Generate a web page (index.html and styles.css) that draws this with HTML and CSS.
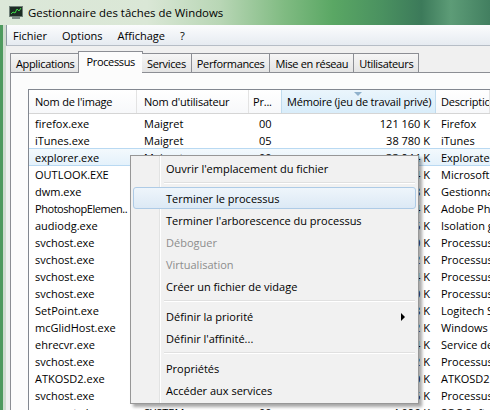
FILE: index.html
```html
<!DOCTYPE html>
<html lang="fr">
<head>
<meta charset="utf-8">
<title>Gestionnaire des tâches de Windows</title>
<link rel="stylesheet" href="styles.css">
</head>
<body>
<div class="window">
  <div class="titlebar">
    <svg class="appicon" width="14" height="14" viewBox="0 0 14 14">
      <rect x="0.5" y="0.5" width="13" height="10" fill="#1d2b24" stroke="#6f7f78"/>
      <polyline points="2,8 4,6 6,7 8,3 10,5 12,2" fill="none" stroke="#3fdc4a" stroke-width="1"/>
      <rect x="3" y="11" width="8" height="2" fill="#7c8c86"/>
    </svg>
    <span class="title">Gestionnaire des tâches de Windows</span>
  </div>
  <div class="client">
    <div class="menubar">
      <span class="mitem">Fichier</span>
      <span class="mitem">Options</span>
      <span class="mitem">Affichage</span>
      <span class="mitem">?</span>
    </div>
    <div class="tabs">
      <span class="tab">Applications</span>
      <span class="tab active">Processus</span>
      <span class="tab">Services</span>
      <span class="tab">Performances</span>
      <span class="tab">Mise en réseau</span>
      <span class="tab">Utilisateurs</span>
    </div>
    <div class="panel">
      <div class="list">
        <div class="row head">
          <span class="c c1">Nom de l'image</span>
          <span class="c c2">Nom d'utilisateur</span>
          <span class="c c3">Pr...</span>
          <span class="c c4 sorted"><i class="arrow"></i>Mémoire (jeu de travail privé)</span>
          <span class="c c5">Description</span>
        </div>
        <div class="row"><span class="c c1">firefox.exe</span><span class="c c2">Maigret</span><span class="c c3">00</span><span class="c c4">121 160 K</span><span class="c c5">Firefox</span></div>
        <div class="row"><span class="c c1">iTunes.exe</span><span class="c c2">Maigret</span><span class="c c3">05</span><span class="c c4">38 780 K</span><span class="c c5">iTunes</span></div>
        <div class="row sel"><span class="c c1">explorer.exe</span><span class="c c2">Maigret</span><span class="c c3">00</span><span class="c c4">33 944 K</span><span class="c c5">Explorateur Windows</span></div>
        <div class="row"><span class="c c1">OUTLOOK.EXE</span><span class="c c2">Maigret</span><span class="c c3">00</span><span class="c c4">30 484 K</span><span class="c c5">Microsoft Office Outlook</span></div>
        <div class="row"><span class="c c1">dwm.exe</span><span class="c c2">Maigret</span><span class="c c3">00</span><span class="c c4">24 088 K</span><span class="c c5">Gestionnaire de fenêtres</span></div>
        <div class="row"><span class="c c1 tight">PhotoshopElemen..</span><span class="c c2">Maigret</span><span class="c c3">00</span><span class="c c4">20 804 K</span><span class="c c5">Adobe Photoshop</span></div>
        <div class="row"><span class="c c1">audiodg.exe</span><span class="c c2">SERVICE LO...</span><span class="c c3">00</span><span class="c c4">17 916 K</span><span class="c c5">Isolation graphique</span></div>
        <div class="row"><span class="c c1">svchost.exe</span><span class="c c2">SYSTEM</span><span class="c c3">00</span><span class="c c4">15 260 K</span><span class="c c5">Processus hôte</span></div>
        <div class="row"><span class="c c1">svchost.exe</span><span class="c c2">SERVICE LO...</span><span class="c c3">00</span><span class="c c4">12 492 K</span><span class="c c5">Processus hôte</span></div>
        <div class="row"><span class="c c1">svchost.exe</span><span class="c c2">SYSTEM</span><span class="c c3">00</span><span class="c c4">9 884 K</span><span class="c c5">Processus hôte</span></div>
        <div class="row"><span class="c c1">svchost.exe</span><span class="c c2">SERVICE RÉ...</span><span class="c c3">00</span><span class="c c4">8 120 K</span><span class="c c5">Processus hôte</span></div>
        <div class="row"><span class="c c1">SetPoint.exe</span><span class="c c2">Maigret</span><span class="c c3">00</span><span class="c c4">7 348 K</span><span class="c c5">Logitech SetPoint</span></div>
        <div class="row"><span class="c c1">mcGlidHost.exe</span><span class="c c2">Maigret</span><span class="c c3">00</span><span class="c c4">6 912 K</span><span class="c c5">Windows Installer</span></div>
        <div class="row"><span class="c c1">ehrecvr.exe</span><span class="c c2">SERVICE RÉ...</span><span class="c c3">00</span><span class="c c4">6 044 K</span><span class="c c5">Service de récepteur</span></div>
        <div class="row"><span class="c c1">svchost.exe</span><span class="c c2">SERVICE LO...</span><span class="c c3">00</span><span class="c c4">5 712 K</span><span class="c c5">Processus hôte</span></div>
        <div class="row"><span class="c c1">ATKOSD2.exe</span><span class="c c2">Maigret</span><span class="c c3">00</span><span class="c c4">4 980 K</span><span class="c c5">ATKOSD2</span></div>
        <div class="row"><span class="c c1">svchost.exe</span><span class="c c2">SYSTEM</span><span class="c c3">00</span><span class="c c4">4 516 K</span><span class="c c5">Processus hôte</span></div>
        <div class="row"><span class="c c1">wmpnetwk.exe</span><span class="c c2">SYSTEM</span><span class="c c3">00</span><span class="c c4">4 096 K</span><span class="c c5">SOC Software</span></div>
      </div>
    </div>
  </div>

  <div class="ctx">
    <div class="ci">Ouvrir l'emplacement du fichier</div>
    <div class="sep"></div>
    <div class="ci hover">Terminer le processus</div>
    <div class="ci">Terminer l'arborescence du processus</div>
    <div class="ci dis">Déboguer</div>
    <div class="ci dis">Virtualisation</div>
    <div class="ci">Créer un fichier de vidage</div>
    <div class="sep"></div>
    <div class="ci sub">Définir la priorité<i class="subarrow"></i></div>
    <div class="ci">Définir l'affinité...</div>
    <div class="sep"></div>
    <div class="ci">Propriétés</div>
    <div class="ci">Accéder aux services</div>
  </div>
</div>
</body>
</html>
```

FILE: styles.css
```css
* { box-sizing: border-box; }
html, body { margin: 0; padding: 0; }
body {
  width: 490px;
  height: 410px;
  overflow: hidden;
  background: #4e9a5e;
  font-family: "Open Sans", "Noto Sans", sans-serif;
  font-size: 11px;
  color: #000;
}
.window {
  position: relative;
  width: 490px;
  height: 410px;
  display: flex;
  flex-direction: column;
}
.titlebar {
  height: 25px;
  flex: none;
  display: flex;
  align-items: center;
  gap: 5px;
  padding-left: 9px;
  background: linear-gradient(90deg, #dce8d9 0%, #dae7d6 30%, #b8d6b5 45%, #80bb82 58%, #5aa764 68%, #4a9160 78%, #3c7a5a 86%, #5d9c77 92%, #427f60 100%);
}
.appicon { flex: none; margin-top: 1px; }
.title {
  font-size: 11.4px;
  color: #000;
  white-space: nowrap;
}
.client {
  flex: 1;
  margin-left: 3px;
  border-left: 3px solid #cfdccf;
  background: #f0f0f0;
  display: flex;
  flex-direction: column;
  min-height: 0;
}
.menubar {
  height: 21px;
  flex: none;
  display: flex;
  align-items: center;
  border-left: 1px solid #8d9aa2;
  background: linear-gradient(#fbfcfd, #e6ebf1);
  border-bottom: 1px solid #b6bdc6;
}
.mitem { padding: 0 7.5px; }
.mitem:first-child { padding-left: 6px; }
.tabs {
  flex: none;
  display: flex;
  align-items: flex-end;
  margin-top: 5px;
  padding-left: 4px;
  height: 21px;
  position: relative;
  z-index: 1;
}
.tab {
  height: 19px;
  padding: 0 5px;
  display: flex;
  align-items: center;
  border: 1px solid #8c8e94;
  border-bottom: none;
  border-right: none;
  background: linear-gradient(#f6f6f6, #e4e4e4);
  white-space: nowrap;
  letter-spacing: -0.35px;
}
.tab:last-child { border-right: 1px solid #8c8e94; }
.tab.active {
  height: 22px;
  margin-bottom: -1px;
  padding: 0 7px 2px;
  background: #fcfcfc;
  border-right: 1px solid #8c8e94;
  margin-left: -1px;
  margin-right: -1px;
}
.tab.active + .tab { border-left: none; }
.panel {
  flex: 1;
  margin-left: 4px;
  border: 1px solid #8c8e94;
  border-right: none;
  border-bottom: none;
  background: #fcfcfc;
  padding: 16px 0 0 17px;
  min-height: 0;
  overflow: hidden;
}
.list {
  border: 1px solid #828790;
  border-right: none;
  border-bottom: none;
  background: #fff;
  height: 400px;
}
.row {
  display: grid;
  grid-template-columns: 108px 112px 33px 154px 1fr;
  height: 18px;
  margin-top: -1px;
  align-items: center;
  white-space: nowrap;
  border-top: 1px solid transparent;
  border-bottom: 1px solid transparent;
}
.row.head {
  height: 24px;
  margin-top: 0;
  background: linear-gradient(#ffffff, #f7f8fa);
  border-top: none;
  border-bottom: 1px solid #d5d5d5;
  align-items: stretch;
}
.row.head + .row { margin-top: 0; }
.c { overflow: hidden; padding: 0; }
.c1 { padding-left: 6px; }
.c1.tight { letter-spacing: -0.45px; }
.c2 { padding-left: 7px; }
.c3 { padding-left: 10px; }
.c4 { text-align: right; padding-right: 6px; }
.c5 { padding-left: 5px; }
.head .c {
  display: flex;
  align-items: center;
  border-right: 1px solid #e3e3e3;
  position: relative;
  letter-spacing: -0.2px;
}
.head .c3 { padding-left: 4px; }
.head .c4 { justify-content: flex-start; padding-left: 5px; padding-right: 0; }
.head .c4.sorted {
  background: linear-gradient(#eaf5fc, #d9edfa);
  border-left: 1px solid #c0dcef;
  border-right: 1px solid #c0dcef;
  margin-left: -1px;
}
.arrow {
  position: absolute;
  top: 2px;
  left: 72px;
  width: 0; height: 0;
  border-left: 4px solid transparent;
  border-right: 4px solid transparent;
  border-top: 4px solid #8fb1cc;
}
.row.sel {
  background: linear-gradient(#f3f9fd, #e4f1fb);
  border-color: #b9d9f2;
}
.ctx {
  position: absolute;
  left: 130px;
  top: 155px;
  width: 289px;
  height: 249px;
  background: #f1f1f1;
  border: 1px solid #979797;
  box-shadow: 3px 3px 3px rgba(0,0,0,0.35);
  padding: 1px 2px;
  display: flex;
  flex-direction: column;
  z-index: 5;
  background-image: linear-gradient(90deg, transparent 28px, #e2e3e3 28px, #e2e3e3 29px, #ffffff 29px, #ffffff 30px, transparent 30px);
}
.ci {
  height: 22px;
  flex: none;
  display: flex;
  align-items: center;
  padding-left: 32px;
  position: relative;
  border: 1px solid transparent;
  border-radius: 3px;
  white-space: nowrap;
}
.ci.hover {
  background: linear-gradient(#eef5fb, #dce9f5);
  border-color: #aecbe6;
}
.ci.dis { color: #8d8d8d; }
.subarrow {
  position: absolute;
  right: 10px;
  top: 7px;
  width: 0; height: 0;
  border-top: 4px solid transparent;
  border-bottom: 4px solid transparent;
  border-left: 4px solid #000;
}
.sep {
  flex: none;
  height: 8px;
  margin-left: 31px;
  margin-right: 1px;
  background: linear-gradient(transparent 3px, #e0e0e0 3px, #e0e0e0 4px, #fff 4px, #fff 5px, transparent 5px);
}
```
